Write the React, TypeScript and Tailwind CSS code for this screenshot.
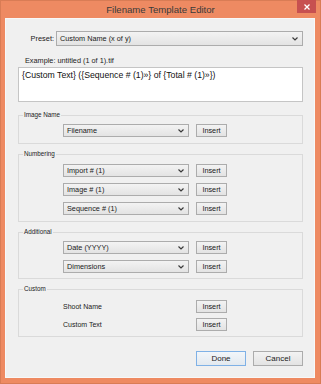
import React from "react";

const Chevron = () => (
  <svg className="ml-auto mr-[4px] shrink-0" width="6" height="4" viewBox="0 0 6 4">
    <path d="M0.5 0.5 L3 3 L5.5 0.5" stroke="#3a3a3a" strokeWidth="1.2" fill="none" />
  </svg>
);

const Select = ({ label, wide }: { label: string; wide?: boolean }) => (
  <div
    className={`flex items-center border border-[#acacac] bg-linear-to-b from-[#f3f3f3] to-[#e3e3e3] pl-[3px] text-[7.3px] leading-none text-[#1a1a1a] ${
      wide ? "h-[15px] flex-1" : "h-[13px] w-[126px]"
    }`}
  >
    <span>{label}</span>
    <Chevron />
  </div>
);

const Btn = ({ label, w = "w-[31px]", h = "h-[13px]", primary }: { label: string; w?: string; h?: string; primary?: boolean }) => (
  <div
    className={`flex items-center justify-center border ${
      primary ? "border-[#7fb1e6] from-[#f2f6fa] to-[#e3e9ef]" : "border-[#acacac] from-[#f3f3f3] to-[#e3e3e3]"
    } bg-linear-to-b ${w} ${h} leading-none text-[#1a1a1a]`}
  >
    {label}
  </div>
);

const Group = ({ title, children, pt, pb, gap }: { title: string; children: React.ReactNode; pt: string; pb: string; gap: string }) => (
  <div className={`relative border border-[#dadada] ${pt} ${pb} pl-[44px] flex flex-col ${gap}`}>
    <span className="absolute -top-[5px] left-[4px] bg-[#f0f0f0] px-[1px] text-[6.3px] leading-[8px] text-[#222]">
      {title}
    </span>
    {children}
  </div>
);

const Row = ({ label }: { label: string }) => (
  <div className="flex items-center gap-[7px] text-[7.3px]">
    <Select label={label} />
    <Btn label="Insert" />
  </div>
);

const TextRow = ({ label }: { label: string }) => (
  <div className="flex items-center gap-[7px] text-[7.3px]">
    <div className="w-[126px] text-[7px] leading-none text-[#1a1a1a]">{label}</div>
    <Btn label="Insert" />
  </div>
);

export default function App() {
  return (
    <div className="w-[321px] h-[384px] bg-[#ee8a62] border border-[#d97c55] flex flex-col font-['Liberation_Sans',Arial,sans-serif]">
      <div className="relative h-[17px] flex items-center justify-center">
        <span className="text-[9.6px] leading-none text-[#3a3a3a] pt-[1px]">Filename Template Editor</span>
        <div className="absolute -top-[1px] right-[4px] w-[19px] h-[13px] bg-[#c75050] flex items-center justify-center">
          <svg width="6" height="6" viewBox="0 0 6 6">
            <path d="M0.5 0.5 L5.5 5.5 M5.5 0.5 L0.5 5.5" stroke="#ffffff" strokeWidth="1.3" />
          </svg>
        </div>
      </div>
      <div className="ml-[4px] mr-[5px] mb-[5px] flex-1 bg-[#f0f0f0] border border-[#f8f8f8] pl-[12px] pr-[11px] pt-[12px] flex flex-col">
        <div className="flex items-center h-[15px]">
          <div className="w-[38px] pr-[2px] text-right text-[7.4px] text-[#1a1a1a] leading-none">Preset:</div>
          <Select label="Custom Name (x of y)" wide />
        </div>
        <div className="mt-[10px] pl-[7px] text-[7.3px] leading-[9px] text-[#222]">Example: untitled (1 of 1).tif</div>
        <div className="mt-[2px] h-[35px] bg-white border border-[#c5c5c5] px-[3px] pt-[2px] text-[8.7px] leading-[11px] text-[#111]">
          {"{Custom Text} ({Sequence # (1)»} of {Total # (1)»})"}
        </div>
        <div className="mt-[13px]">
          <Group title="Image Name" pt="pt-[8px]" pb="pb-[6px]" gap="gap-[6px]">
            <Row label="Filename" />
          </Group>
        </div>
        <div className="mt-[10px]">
          <Group title="Numbering" pt="pt-[9px]" pb="pb-[6px]" gap="gap-[6px]">
            <Row label="Import # (1)" />
            <Row label="Image # (1)" />
            <Row label="Sequence # (1)" />
          </Group>
        </div>
        <div className="mt-[10px]">
          <Group title="Additional" pt="pt-[8px]" pb="pb-[5px]" gap="gap-[6px]">
            <Row label="Date (YYYY)" />
            <Row label="Dimensions" />
          </Group>
        </div>
        <div className="mt-[10px]">
          <Group title="Custom" pt="pt-[10px]" pb="pb-[5px]" gap="gap-[5px]">
            <TextRow label="Shoot Name" />
            <TextRow label="Custom Text" />
          </Group>
        </div>
        <div className="mt-[14px] flex justify-end gap-[7px] text-[8px]">
          <Btn label="Done" w="w-[50px]" h="h-[15px]" primary />
          <Btn label="Cancel" w="w-[50px]" h="h-[15px]" />
        </div>
      </div>
    </div>
  );
}
